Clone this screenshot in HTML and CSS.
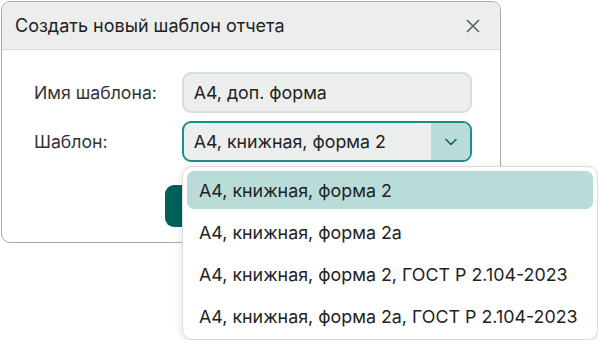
FILE: index.html
```html
<!DOCTYPE html>
<html lang="ru">
<head>
<meta charset="utf-8">
<link rel="stylesheet" href="styles.css">
</head>
<body>
<div class="dialog">
  <div class="dialog-header">
    <span class="dialog-title">Создать новый шаблон отчета</span>
    <svg class="close" width="14" height="14" viewBox="0 0 14 14"><path d="M1 1L13 13M13 1L1 13" stroke="#566260" stroke-width="1.6" fill="none"/></svg>
  </div>
  <div class="dialog-body">
    <div class="row">
      <label class="label">Имя шаблона:</label>
      <div class="input">А4, доп. форма</div>
    </div>
    <div class="row">
      <label class="label">Шаблон:</label>
      <div class="select">
        <span class="select-value">А4, книжная, форма 2</span>
        <span class="select-btn"><svg width="12" height="8" viewBox="0 0 12 8"><path d="M1 1.5L6 6.5L11 1.5" stroke="#17615c" stroke-width="1.6" fill="none" stroke-linecap="round" stroke-linejoin="round"/></svg></span>
      </div>
    </div>
    <div class="footer">
      <button class="btn" aria-label="Создать"></button>
    </div>
  </div>
</div>
<ul class="dropdown">
  <li class="item active">А4, книжная, форма 2</li>
  <li class="item">А4, книжная, форма 2а</li>
  <li class="item">А4, книжная, форма 2, ГОСТ Р 2.104-2023</li>
  <li class="item">А4, книжная, форма 2а, ГОСТ Р 2.104-2023</li>
</ul>
</body>
</html>
```
FILE: styles.css
```css
html, body {
  margin: 0;
  padding: 0;
  background: #ffffff;
  font-family: Inter, "Noto Sans", sans-serif;
  color: #222;
}
body {
  position: relative;
  width: 598px;
  height: 340px;
  overflow: hidden;
}
.dialog {
  margin: 1px 0 0 1px;
  width: 500px;
  height: 242px;
  box-sizing: border-box;
  border: 1px solid #a9a9a9;
  border-radius: 9px;
  background: #fff;
  overflow: hidden;
  display: flex;
  flex-direction: column;
}
.dialog-header {
  height: 48px;
  box-sizing: border-box;
  background: #eceeed;
  border-bottom: 1px solid #d3dcdb;
  display: flex;
  align-items: center;
  justify-content: space-between;
  padding: 0 20px 0 13px;
}
.dialog-title {
  font-size: 18px;
  color: #222;
}
.close { display: block; }
.dialog-body {
  padding: 22px 28px 0 32px;
  display: flex;
  flex-direction: column;
  gap: 8px;
}
.row {
  display: flex;
  align-items: center;
}
.label {
  width: 148px;
  font-size: 17.7px;
  color: #333;
}
.input, .select {
  width: 291px;
  height: 41px;
  box-sizing: border-box;
  border-radius: 9px;
  background: #eceeed;
  font-size: 17.8px;
  color: #222;
  display: flex;
  align-items: center;
}
.input {
  border: 2px solid #d7dfde;
  padding-left: 10px;
}
.select {
  border: 2px solid #1a8e85;
  padding-left: 10px;
  justify-content: space-between;
  overflow: hidden;
}
.select-btn {
  width: 39px;
  height: 100%;
  background: #b9dcd9;
  display: flex;
  align-items: center;
  justify-content: center;
  border-radius: 0 7px 7px 0;
}
.select-btn svg { display: block; }
.footer {
  padding: 15px 0 0 131px;
}
.btn {
  display: block;
  width: 200px;
  height: 42px;
  border: 0;
  border-radius: 9px;
  background: #00615b;
}
.dropdown {
  position: absolute;
  left: 182px;
  top: 166px;
  width: 416px;
  box-sizing: border-box;
  margin: 0;
  padding: 4px;
  list-style: none;
  background: #fff;
  border: 1px solid #dcdcdc;
  border-radius: 10px;
  box-shadow: 0 2px 8px rgba(0,0,0,0.12);
  display: flex;
  flex-direction: column;
  gap: 4px;
}
.item {
  height: 38px;
  display: flex;
  align-items: center;
  padding-left: 12px;
  font-size: 17.85px;
  color: #222;
  border-radius: 7px;
}
.item.active {
  background: #badcd9;
}
```
